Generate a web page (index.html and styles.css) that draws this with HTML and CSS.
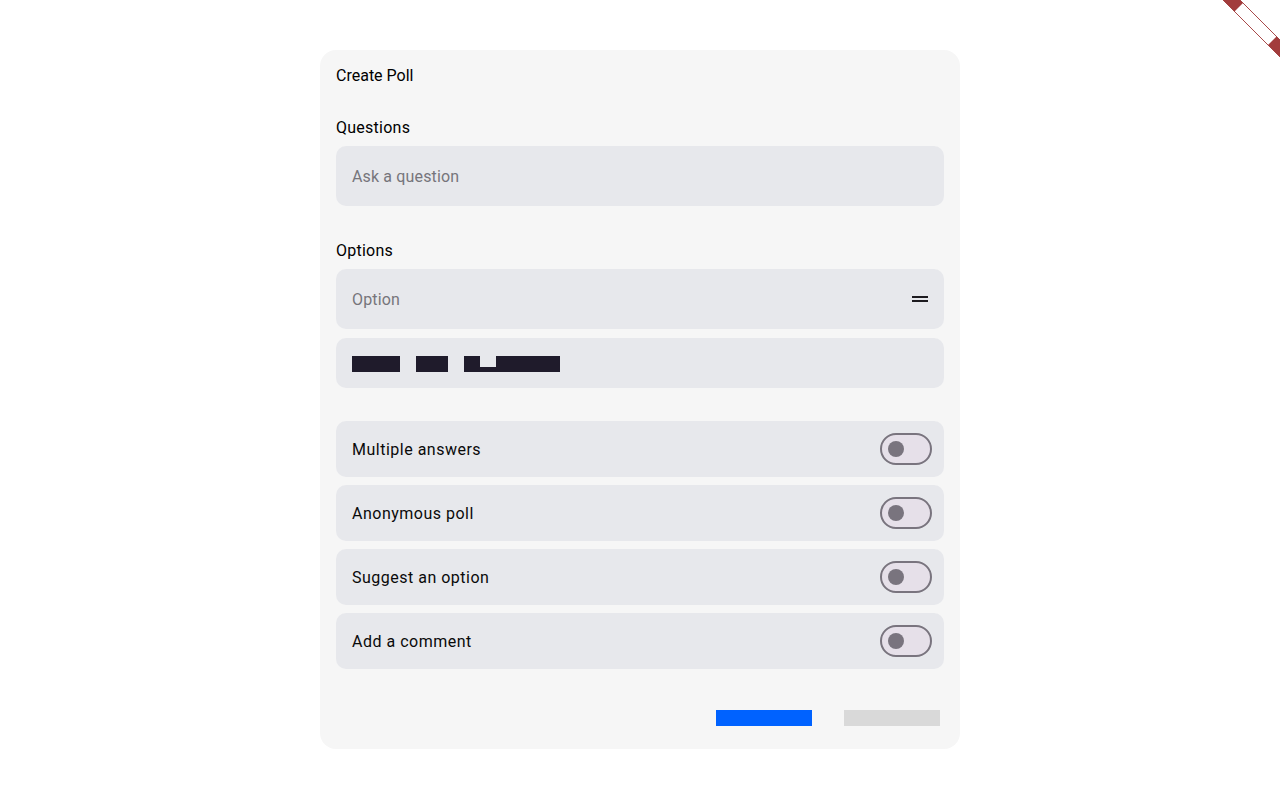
FILE: index.html
```html
<!DOCTYPE html>
<html>
<head>
<meta charset="utf-8">
<title>Create Poll</title>
<link rel="stylesheet" href="styles.css">
</head>
<body>
<div class="page">
  <div class="card">
    <div class="title">Create Poll</div>
    <div class="label label-q">Questions</div>
    <div class="field"><span class="placeholder">Ask a question</span></div>
    <div class="label label-o">Options</div>
    <div class="field field-option">
      <span class="placeholder">Option</span>
      <span class="drag"><i></i><i></i></span>
    </div>
    <div class="blocks-row">
      <span class="blk blk1"></span>
      <span class="blk blk2"></span>
      <span class="blk blk3"><span class="notch"></span></span>
    </div>
    <div class="settings">
      <div class="setting"><span>Multiple answers</span><span class="toggle"><span class="thumb"></span></span></div>
      <div class="setting"><span>Anonymous poll</span><span class="toggle"><span class="thumb"></span></span></div>
      <div class="setting"><span>Suggest an option</span><span class="toggle"><span class="thumb"></span></span></div>
      <div class="setting"><span>Add a comment</span><span class="toggle"><span class="thumb"></span></span></div>
    </div>
    <div class="actions">
      <span class="btn btn-primary"></span>
      <span class="btn btn-secondary"></span>
    </div>
  </div>
</div>
<svg class="banner" width="60" height="60" viewBox="0 0 60 60">
  <polygon points="3,0 20,0 60,40 60,57" fill="#ffffff" stroke="#e9c6c6" stroke-width="1"/>
  <line x1="3" y1="0" x2="60" y2="57" stroke="#a84a4a" stroke-width="1"/>
  <line x1="20" y1="0" x2="60" y2="40" stroke="#a84a4a" stroke-width="1"/>
  <polygon points="3,0 20,0 23,3 14.5,11.5" fill="#a23c3c"/>
  <polygon points="48,45 56.5,36.5 60,40 60,57" fill="#a23c3c"/>
</svg>
</body>
</html>
```
FILE: styles.css
```css
* { box-sizing: border-box; }
html, body { margin: 0; padding: 0; }
body {
  background: #ffffff;
  font-family: Roboto, "Noto Sans", "Liberation Sans", sans-serif;
  color: #000;
  width: 1280px;
  height: 800px;
  overflow: hidden;
  position: relative;
}
.page {
  display: flex;
  justify-content: center;
  padding-top: 50px;
}
.card {
  width: 640px;
  height: 699px;
  background: #f6f6f6;
  border-radius: 16px;
  padding: 17px 16px 0 16px;
  display: flex;
  flex-direction: column;
}
.title {
  font-size: 16px;
  line-height: 18px;
  color: #000;
}
.label {
  font-size: 16px;
  line-height: 19px;
  letter-spacing: 0.25px;
  color: #000;
}
.label-q { margin-top: 33px; margin-bottom: 9px; }
.label-o { margin-top: 35px; margin-bottom: 9px; }
.field {
  height: 60px;
  background: #e7e8ec;
  border-radius: 10px;
  display: flex;
  align-items: center;
  padding: 0 16px;
}
.placeholder {
  font-size: 16px;
  color: #76757b;
  letter-spacing: 0.15px;
}
.field-option { justify-content: space-between; }
.drag {
  display: flex;
  flex-direction: column;
  gap: 1.5px;
  width: 16px;
}
.drag i {
  display: block;
  height: 2.5px;
  background: #1d1b20;
}
.blocks-row {
  margin-top: 9px;
  height: 50px;
  background: #e7e8ec;
  border-radius: 10px;
  display: flex;
  align-items: center;
  padding: 2px 16px 0 16px;
  gap: 16px;
}
.blk {
  display: block;
  height: 16px;
  background: #1f1b2b;
  position: relative;
}
.blk1 { width: 48px; }
.blk2 { width: 32px; }
.blk3 { width: 96px; }
.notch {
  position: absolute;
  left: 16px;
  top: 0;
  width: 16px;
  height: 11px;
  background: #e7e8ec;
}
.settings {
  margin-top: 33px;
  display: flex;
  flex-direction: column;
  gap: 8px;
}
.setting {
  height: 56px;
  background: #e7e8ec;
  border-radius: 10px;
  display: flex;
  align-items: center;
  justify-content: space-between;
  padding: 0 12px 0 16px;
  font-size: 16px;
  letter-spacing: 0.5px;
  color: #0a0a0a;
}
.toggle {
  width: 52px;
  height: 32px;
  border: 2px solid #79747e;
  border-radius: 16px;
  background: #e6e0e9;
  display: flex;
  align-items: center;
  padding-left: 6px;
}
.thumb {
  width: 16px;
  height: 16px;
  border-radius: 50%;
  background: #79747e;
}
.actions {
  margin-top: 41px;
  display: flex;
  justify-content: flex-end;
  gap: 32px;
  padding-right: 4px;
}
.btn {
  display: block;
  width: 96px;
  height: 16px;
}
.btn-primary { background: #0062ff; }
.btn-secondary { background: #d9d9d9; }
.banner {
  position: absolute;
  right: 0;
  top: 0;
}
```
